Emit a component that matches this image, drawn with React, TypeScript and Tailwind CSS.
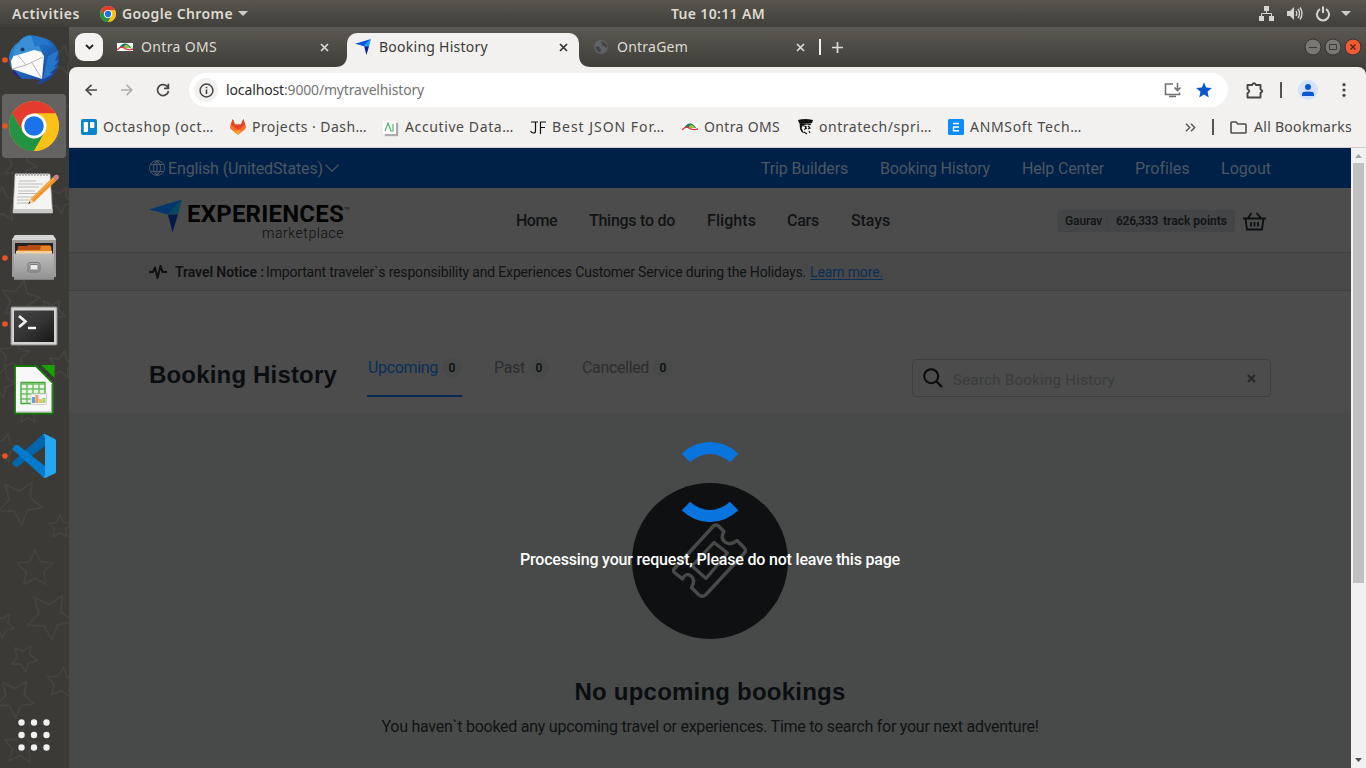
import { useLayoutEffect, useRef, type ReactNode } from 'react';

/** Single line of text, tracked so that it fills the width of its box. */
function T({ c, u, children }: { c: string; u?: boolean; children: string }) {
  const ref = useRef<HTMLSpanElement>(null);
  useLayoutEffect(() => {
    const el = ref.current;
    if (!el || !el.parentElement) return;
    el.style.letterSpacing = '0px';
    const room = el.parentElement.getBoundingClientRect().width;
    const own = el.getBoundingClientRect().width;
    el.style.letterSpacing = `${(room - own) / children.length}px`;
  }, [children]);
  return (
    <span className={`block shrink-0 whitespace-nowrap ${c}`}>
      <span ref={ref} className={u ? 'inline-block underline underline-offset-2' : 'inline-block'}>{children}</span>
    </span>
  );
}

function Svg({ c, box, children }: { c: string; box: string; children: ReactNode }) {
  return (
    <svg className={`block shrink-0 ${c}`} viewBox={box} fill="none">
      {children}
    </svg>
  );
}

function ChromeLogo({ c }: { c: string }) {
  return (
    <Svg c={c} box="0 0 50 50">
      <circle cx="25" cy="25" r="25" fill="#fbc116" />
      <path d="M25 25 14.2 31.2 3.4 12.5A25 25 0 0 1 46.6 12.5H25Z" fill="#e33b2e" />
      <path d="M3.4 12.5 14.2 31.2 25 37.5 35.8 31.2 25 50A25 25 0 0 1 3.4 12.5Z" fill="#229342" />
      <path d="M35.8 31.2 25 50A25 25 0 0 0 46.6 12.5H25Z" fill="#fbc116" />
      <circle cx="25" cy="25" r="12.5" fill="#fff" />
      <circle cx="25" cy="25" r="9.8" fill="#1a73e8" />
    </Svg>
  );
}

function CloseX({ c }: { c: string }) {
  return (
    <Svg c={`size-[9px] ${c}`} box="0 0 9 9">
      <path d="M1 1l7 7M8 1L1 8" stroke="currentColor" strokeWidth="1.7" />
    </Svg>
  );
}

function OntraIcon({ c }: { c: string }) {
  return (
    <Svg c={c} box="0 0 16 16">
      <path d="M0 4h16v8H0z" fill="#fff" />
      <path d="M2 9Q5 4 8.5 4.5 12 5 14 9Z" fill="#17766b" />
      <path d="M6 9q2-4 4-3t3 3Z" fill="#9bc53d" />
      <path d="M0 11Q4 6.5 7 9t9 1" stroke="#e2383f" strokeWidth="1.3" />
    </Svg>
  );
}

const star = (x: number, y: number, r: number, a: number) =>
  Array.from({ length: 10 }, (_, i) => {
    const q = i % 2 ? r * 0.48 : r;
    const t = a + (i * Math.PI) / 5;
    return `${(x + q * Math.sin(t)).toFixed(1)},${(y - q * Math.cos(t)).toFixed(1)}`;
  }).join(' ');

const STARS: number[][] = [
  [20, 165, 17, 0.4], [2, 205, 18, 0], [60, 200, 14, 0.5], [20, 300, 20, 0.2], [52, 312, 14, 0.6],
  [14, 355, 16, 0.1], [62, 365, 14, 0.2], [0, 382, 16, 0.4], [28, 412, 12, 0], [4, 448, 15, 0.3],
  [20, 502, 23, 0.55], [60, 527, 12, 0], [35, 569, 19, 0], [50, 616, 24, 0.55], [2, 625, 13, 0.6],
  [24, 658, 14, 0.5], [15, 698, 20, 0.6], [62, 683, 16, 0.1], [21, 747, 18, 0.1], [62, 60, 15, 0.2], [55, 110, 14, 0],
];

function Dock() {
  return (
    <div className="relative flex w-[69px] shrink-0 flex-col bg-[#3b3a37]">
      <svg className="absolute inset-0 h-full w-full" viewBox="0 27 69 741" fill="none">
        {STARS.map(([x, y, r, a], i) => (
          <polygon key={i} points={star(x, y, r, a)} stroke="#444340" strokeWidth="1.8" strokeLinejoin="round" />
        ))}
      </svg>
      <div className="relative flex h-[741px] flex-col">
        {/* Thunderbird */}
        <Svg c="h-[66px] w-[69px]" box="0 27 69 66">
          <defs>
            <linearGradient id="tb" x1="0" y1="0" x2="1" y2="1"><stop offset="0" stopColor="#2d93dc" /><stop offset=".5" stopColor="#1d68bd" /><stop offset="1" stopColor="#1d2f86" /></linearGradient>
          </defs>
          <circle cx="5" cy="60" r="2.8" fill="#e95420" />
          <path d="M19 42Q23 36 30 35L33 37Q47 36 54 44Q61 53 58 66Q54 80 40 84L36 84 41 81 35 79 22 79Q9 71 9 58Q10 47 19 42Z" fill="url(#tb)" />
          <path d="M13 69 22 79 13 74Z" fill="#35206f" />
          <path d="M48 56 59 50 55 61 59 60 54 67 58 66 50 73 53 74 43 79" fill="#2677c9" />
          <path d="M26 50 40 50 44 56 42 79 12 69 11 61 15 53Z" fill="#fafafa" />
          <path d="M16 53 26 65 43 57M26 65 12 69M32 63 42 79" stroke="#b0b0b0" strokeWidth=".9" />
          <path d="M19 42Q12 49 14 56L21 54 34 50 42 52 38 44 31 36Q23 36 19 42Z" fill="#3a8fd6" />
          <path d="M31 35Q45 36 53 47 43 42 35 47Z" fill="#2477cc" />
          <circle cx="22.500" cy="49.500" r="2" fill="#1f3965" />
        </Svg>
        {/* Chrome */}
        <div className="flex h-[66px] items-center">
          <div className="ml-[2px] flex h-16 w-16 items-center rounded-[4px] bg-[#646361]">
            <Svg c="size-[6px]" box="0 0 6 6"><circle cx="3" cy="3" r="2.800" fill="#e95420" /></Svg>
            <ChromeLogo c="ml-[1px] size-[50px]" />
          </div>
        </div>
        {/* Text editor */}
        <Svg c="h-[66px] w-[69px]" box="0 159 69 66">
          <path d="M15 174H50L52.500 213H13Z" fill="#f4f4f2" stroke="#aaa" strokeWidth=".7" />
          <path d="M13 209H52.500V213H13Z" fill="#c9cac8" />
          <path d="M17 176V173M20 176V173M23 176V173M26 176V173M29 176V173M32 176V173M35 176V173M38 176V173M41 176V173M44 176V173M47 176V173" stroke="#a4a4a4" strokeWidth="1.400" />
          <path d="M19 181H36M18 184H43M18 187H39M18 191H35M18 193.500H37M17 197H33M17 200H31M17 203H28" stroke="#bcbcbc" strokeWidth="1.200" />
          <path d="M28 204 30.500 199 53 177 56.500 180.500 34 202Z" fill="#f0962c" />
          <path d="M30.500 199 34 202 28 204Z" fill="#ebd7a9" />
          <path d="M53 177 55 175Q60 174 58.500 178.500L56.500 180.500Z" fill="#d48388" />
          <path d="M31 200 54 178" stroke="#f9bc63" />
          <path d="M28 204l1.500-2.500 1 1.300Z" fill="#222" />
        </Svg>
        {/* Files */}
        <Svg c="h-[66px] w-[69px]" box="0 225 69 66">
          <defs><linearGradient id="fl" x1="0" y1="0" x2="0" y2="1"><stop stopColor="#bcbcbc" /><stop offset="1" stopColor="#929292" /></linearGradient></defs>
          <circle cx="5" cy="258" r="2.800" fill="#e95420" />
          <path d="M15 235H53L56 239V277H54V279.500H14V277H12V239Z" fill="#9b9b9b" />
          <path d="M15 235H53L56 240H12Z" fill="#d6d6d6" />
          <path d="M15 243H53V255H15Z" fill="#25211e" />
          <path d="M18 246H27L28 245H50V254H17Z" fill="#b54d12" />
          <path d="M17 250H40L41 246H51L52 254H16Z" fill="#e68426" />
          <path d="M16 251H52V255H16Z" fill="#f7d09b" />
          <path d="M14 253.500H54V279.500H14Z" fill="url(#fl)" />
          <rect x="28" y="262.500" width="12" height="9.500" rx="2" stroke="#777" />
          <rect x="30" y="264.500" width="8" height="5.500" rx=".5" fill="#eee" stroke="#666" strokeWidth=".8" />
        </Svg>
        {/* Terminal */}
        <Svg c="h-[66px] w-[69px]" box="0 291 69 66">
          <defs><linearGradient id="tm" x1="0" y1="0" x2="1" y2="1"><stop stopColor="#454545" /><stop offset=".5" stopColor="#353535" /><stop offset="1" stopColor="#171717" /></linearGradient></defs>
          <circle cx="5" cy="324" r="2.800" fill="#e95420" />
          <rect x="11" y="307" width="46" height="38" rx="1" fill="#d3d3d3" stroke="#888" />
          <rect x="14" y="310.500" width="40" height="31.500" fill="url(#tm)" />
          <path d="M19 316 25.500 321.500 19 327" stroke="#f3f3f3" strokeWidth="2.700" />
          <path d="M28 328H36" stroke="#f3f3f3" strokeWidth="2.500" />
        </Svg>
        {/* Spreadsheet */}
        <Svg c="h-[66px] w-[69px]" box="0 357 69 66">
          <path d="M15 366H36L53 383V413.500H15Z" fill="#f8f8f8" stroke="#147808" strokeWidth="1.800" />
          <path d="M16.500 412H51.500V384" stroke="#aaa" />
          <path d="M41 365H54.500V378Z" fill="#18a303" />
          <path d="M21 382.500H45V403.500H21Z" fill="#e8f5e3" stroke="#43a638" strokeWidth="1.300" />
          <path d="M21 384H45M21 389H45M21 394H45M21 399H45M27 383V403M33 383V403M39 383V403" stroke="#6ebb63" strokeWidth="1.400" />
          <path d="M31 394H46.500V404.500H31Z" fill="#f8f8f8" stroke="#ccc" strokeWidth=".8" />
          <path d="M32 397H35V403H32Z" fill="#5aa4e3" /><path d="M35.300 395H38.500V403H35.300Z" fill="#ef9a70" /><path d="M39 399H42V403H39Z" fill="#f6c34f" /><path d="M42.300 398H45.500V403H42.300Z" fill="#98db7a" />
        </Svg>
        {/* VS Code */}
        <Svg c="h-[66px] w-[69px]" box="0 423 69 66">
          <circle cx="5" cy="456" r="2.800" fill="#e95420" />
          <path d="M12 462.500 43 434 45 435V446L18 466.500Q16 468 14.500 466L12 463.500Z" fill="#0065a9" />
          <path d="M12 449 15 445.500Q16.500 444 18.500 445.500L45 466V476L43 477Z" fill="#007acc" />
          <path d="M43 434 45 434 55 439Q56 440 56 441V471Q56 473 55 473.500L45 478 43 477.500Q45 477 45 474V438Q45 435 43 434Z" fill="#27a6f2" />
        </Svg>
        <div className="flex-1" />
        <Svg c="h-[66px] w-[69px]" box="0 702 69 66">
          {[722.5, 735, 747.5].map((y) => [21.5, 34, 46.5].map((x) => <circle key={`${x}-${y}`} cx={x} cy={y} r="3.2" fill="#f0f0ee" />))}
        </Svg>
      </div>
    </div>
  );
}

function TopBar() {
  return (
    <div className="flex h-[27px] shrink-0 items-center bg-linear-to-b from-[#57554d] to-[#403f3a] text-[14px] leading-[20px] font-semibold text-[#dfdbd2]">
      <T c="ml-[12px] w-[68px]">Activities</T>
      <ChromeLogo c="ml-[20px] size-4" />
      <T c="ml-[6px] w-[111px]">Google Chrome</T>
      <Svg c="ml-[5px] h-[5px] w-[10px]" box="0 0 10 5"><path d="M0 0h10L5 5Z" fill="#cfccc4" /></Svg>
      <T c="ml-[423px] w-[94px]">Tue 10:11 AM</T>
      <Svg c="ml-[494px] h-[15px] w-[15px]" box="0 0 15 15">
        <path d="M5 0h5v5H5zM0 10h5v5H0zM10 10h5v5h-5z" fill="#d6d4cf" />
        <path d="M7.500 5v3M2.500 10V7.500h10V10" stroke="#d6d4cf" />
      </Svg>
      <Svg c="ml-[13px] h-[15px] w-[16px]" box="0 0 16 15">
        <path d="M0 5h3l4-4v13l-4-4H0Z" fill="#d6d4cf" />
        <path d="M9 5q1.500 2.500 0 5M11 3q3 4.500 0 9M13 1.500q4 6 0 12" stroke="#d6d4cf" strokeWidth="1.400" />
      </Svg>
      <Svg c="ml-[13px] h-[16px] w-[14px]" box="0 0 14 16">
        <path d="M4 3.200a6 6 0 1 0 6 0M7 .5V7" stroke="#d6d4cf" strokeWidth="2" />
      </Svg>
      <Svg c="ml-[11px] h-[5px] w-[10px]" box="0 0 10 5"><path d="M0 0h10L5 5Z" fill="#cfccc4" /></Svg>
    </div>
  );
}

function PlaneMark({ c, dim }: { c: string; dim?: boolean }) {
  return (
    <Svg c={c} box="0 0 33 33">
      <path d="M0 10 33 0 19 15Z" fill={dim ? '#05376f' : '#0a56e0'} />
      <path d="M33 0 29 15 19 15Z" fill={dim ? '#07485f' : '#10a3ea'} />
      <path d="M19 15 29 15 23.500 33Z" fill={dim ? '#07194a' : '#0b1ea0'} />
    </Svg>
  );
}

function TabStrip() {
  return (
    <div className="flex h-[40px] items-end bg-linear-to-b from-[#5b5951] to-[#3f3e39] text-[14px] leading-[20px]">
      <div className="flex h-[40px] w-[266px] items-center pl-[6px]">
        <div className="flex size-[28px] items-center justify-center rounded-[9px] bg-[#f4f3f1]">
          <Svg c="h-[6px] w-[9px]" box="0 0 9 6"><path d="M1 1l3.500 3.500L8 1" stroke="#222" strokeWidth="1.800" /></Svg>
        </div>
        <OntraIcon c="ml-[14px] size-4" />
        <T c="ml-[8px] w-[76px] text-[#dedbd3]">Ontra OMS</T>
        <CloseX c="ml-[103px] text-[#dedbd3]" />
      </div>
      <Svg c="h-[12px] w-[12px]" box="0 0 12 12"><path d="M12 0v12H0Q12 12 12 0Z" fill="#f2f1ef" /></Svg>
      <div className="flex h-[34px] w-[232px] items-center rounded-t-[10px] bg-[#f2f1ef] pb-[6px] pl-[8px] text-[#3b3a38]">
        <PlaneMark c="size-[16px]" />
        <T c="ml-[8px] w-[109px]">Booking History</T>
        <CloseX c="ml-[71px] text-[#333]" />
      </div>
      <Svg c="h-[12px] w-[12px]" box="0 0 12 12"><path d="M0 0v12h12Q0 12 0 0Z" fill="#f2f1ef" /></Svg>
      <div className="flex h-[40px] flex-1 items-center">
        <Svg c="ml-[3px] size-[14px]" box="0 0 14 14">
          <circle cx="7" cy="7" r="7" fill="#5f6368" />
          <path d="M1.500 7q3-1 4 .5l1.500 1.500-.5 3.500q-4-1-5-5.500ZM6 2l2.500 1-1 2 2.500 1 1.500 1.500 2-.5Q12 3 9 1.500Z" fill="#434240" />
        </Svg>
        <T c="ml-[9px] w-[71px] text-[#dedbd3]">OntraGem</T>
        <CloseX c="ml-[108px] text-[#dedbd3]" />
        <div className="ml-[14px] h-4 w-[2px] bg-[#f2f1ef]" />
        <Svg c="ml-[11px] size-[11px]" box="0 0 11 11"><path d="M5.500 0v11M0 5.500h11" stroke="#dedbd3" strokeWidth="1.700" /></Svg>
        <Svg c="mr-[4px] ml-auto h-[18px] w-[58px]" box="0 0 58 18">
          <circle cx="9" cy="9" r="8" fill="#7a7870" stroke="#35342f" /><path d="M5 9.500h8" stroke="#3b3a36" />
          <circle cx="29" cy="9" r="8" fill="#7a7870" stroke="#35342f" /><path d="M25.500 6.500h7v5h-7z" stroke="#3b3a36" />
          <circle cx="49" cy="9" r="8" fill="#ec5b36" stroke="#35342f" /><path d="M46.500 6.500l5 5M51.500 6.500l-5 5" stroke="#52210f" strokeWidth="1.200" />
        </Svg>
      </div>
    </div>
  );
}

function Toolbar() {
  return (
    <div className="bg-[#3f3e39]">
      <div className="flex h-[46px] items-center rounded-t-[8px] bg-[#f2f1ef]">
        <Svg c="ml-[16px] size-[12px]" box="0 0 12 12"><path d="M12 6H1M6.500 .8L1.200 6l5.300 5.200" stroke="#474645" strokeWidth="1.700" /></Svg>
        <Svg c="ml-[24px] size-[12px]" box="0 0 12 12"><path d="M0 6h11M5.500 .8L10.800 6l-5.300 5.200" stroke="#b0afad" strokeWidth="1.700" /></Svg>
        <Svg c="ml-[23px] size-[14px]" box="0 0 14 14"><path d="M12.500 8A5.500 5.500 0 1 1 11 3.200L12 4.500M12.400 .8v4.500H8" stroke="#474645" strokeWidth="1.700" /></Svg>
        <div className="ml-[19px] flex h-[34px] w-[1039px] items-center rounded-full bg-white">
          <div className="ml-[5px] flex size-6 items-center justify-center rounded-full bg-[#f2f1ef]">
            <Svg c="size-[15px]" box="0 0 15 15"><circle cx="7.500" cy="7.500" r="6.400" stroke="#474645" strokeWidth="1.500" /><path d="M7.500 6.500v4.500M7.500 3.700v1.600" stroke="#474645" strokeWidth="1.600" /></Svg>
          </div>
          <div className="ml-[8px] flex text-[14px] leading-[20px]">
            <T c="w-[58px] text-[#2f2e2d]">localhost</T>
            <T c="w-[140px] text-[#757472]">:9000/mytravelhistory</T>
          </div>
          <Svg c="ml-[740px] h-[15px] w-[18px]" box="0 0 18 15">
            <path d="M9 1H1.500v10.500h14V9.500M13.500 0v7M10.500 4.500l3 3 3-3M5 13.500h7" stroke="#73716f" strokeWidth="1.600" />
          </Svg>
          <Svg c="ml-[14px] h-[16px] w-[16px]" box="0 0 16 16"><path d="M8 .3l2.100 5.200 5.700.5-4.300 3.800 1.300 5.700L8 12.500l-4.800 3 1.300-5.700L.2 6l5.700-.5Z" fill="#0b57d0" /></Svg>
        </div>
        <Svg c="ml-[18px] h-[17px] w-[18px]" box="0 0 18 17">
          <path d="M1.500 3H6q2-3.500 4 0h4.500v4.300q3.500 1.700 0 3.500v4.700h-13v-4.300q3.500-2 0-4.200Z" stroke="#474645" strokeWidth="1.900" strokeLinejoin="round" />
        </Svg>
        <div className="ml-[16px] h-4 w-[2px] bg-[#55534c]" />
        <div className="ml-[16px] flex size-5 items-center justify-center rounded-full bg-[#d3e3fd]">
          <Svg c="size-[12px]" box="0 0 12 12"><circle cx="6" cy="3" r="3" fill="#0b57d0" /><path d="M0 12v-2.500Q0 7.500 6 7.500t6 2V12Z" fill="#0b57d0" /></Svg>
        </div>
        <Svg c="ml-[24px] h-[14px] w-[4px]" box="0 0 4 14"><circle cx="2" cy="1.700" r="1.600" fill="#474645" /><circle cx="2" cy="7" r="1.600" fill="#474645" /><circle cx="2" cy="12.300" r="1.600" fill="#474645" /></Svg>
      </div>
      <div className="flex h-[35px] items-center border-b border-[#cfcdca] bg-[#f2f1ef] pb-[6px] text-[14px] leading-[20px] text-[#4a4947]">
        <Svg c="ml-[12px] size-4" box="0 0 16 16"><rect width="16" height="16" rx="2" fill="#0a84d0" /><rect x="2.700" y="3" width="4.300" height="10" rx=".8" fill="#fff" /><rect x="9" y="3" width="4.300" height="6" rx=".8" fill="#fff" /></Svg>
        <T c="ml-[6px] w-[111px]">Octashop (oct…</T>
        <Svg c="ml-[16px] size-4" box="0 0 16 16"><path d="M2.700 0 .3 7q-.8 2 1 3.500L8 15.700l6.700-5.200q1.800-1.500 1-3.500L13.300 0 11 5.500H5Z" fill="#fc6d26" /><path d="M2.700 0 5 5.500h6L13.300 0l1.800 5.500L8 11 .8 5.500Z" fill="#e24329" /><path d="M8 11l3.500 2L8 15.700 4.500 13Z" fill="#fca326" /></Svg>
        <T c="ml-[6px] w-[115px]">Projects · Dash…</T>
        <div className="ml-[16px] flex h-[13px] w-[13px] items-center justify-center bg-white shadow-[2px_2px_1px_#aaa]">
          <Svg c="size-[11px]" box="0 0 11 11"><path d="M1 9 4 1l3 8h2V2" stroke="#55b56a" strokeWidth="1.200" /></Svg>
        </div>
        <T c="ml-[9px] w-[109px]">Accutive Data…</T>
        <Svg c="ml-[16px] h-[13px] w-[17px]" box="0 0 17 13"><path d="M1 1h7M5.500 1v9q0 2-2 2t-3-2M10.500 13V1H16M10.500 6.500H15" stroke="#111" strokeWidth="1.200" /></Svg>
        <T c="ml-[5px] w-[113px]">Best JSON For…</T>
        <OntraIcon c="ml-[17px] size-4" />
        <T c="ml-[6px] w-[76px]">Ontra OMS</T>
        <Svg c="ml-[18px] h-[16px] w-[15px]" box="0 0 15 16">
          <path d="M0 1Q7-1 15 1L14 4H1Z" fill="#111" />
          <path d="M1.500 4 2 10q1 3 4 4.500L5 12l-1.500-3L5 6l5-.5 2 1 1.500-2Z" fill="#111" />
          <path d="M5 6.500l3 1-1 2.500 2-1M10 7l2 2-2 1M6 13l3 2M11 12l1 2" stroke="#111" strokeWidth="1.100" />
        </Svg>
        <T c="ml-[6px] w-[113px]">ontratech/spri…</T>
        <Svg c="ml-[16px] size-4" box="0 0 16 16"><rect width="16" height="16" rx="1.500" fill="#0a8bff" /><path d="M5 4.500h6M5 8h6M5 11.700h6M5.500 8v4" stroke="#fff" strokeWidth="1.400" /></Svg>
        <T c="ml-[6px] w-[112px]">ANMSoft Tech…</T>
        <Svg c="ml-[103px] h-[9px] w-[11px]" box="0 0 11 9"><path d="M1 .8 4.700 4.500 1 8.200M6 .8 9.700 4.500 6 8.200" stroke="#5a5957" strokeWidth="1.500" /></Svg>
        <div className="ml-[16px] h-4 w-[2px] bg-[#55534c]" />
        <Svg c="ml-[16px] h-[13px] w-[17px]" box="0 0 17 13"><path d="M1.800 1H6l2 2h7.200q.8 0 .8.800v7.400q0 .8-.8.800H1.800Q1 12 1 11.200V1.800Q1 1 1.800 1Z" stroke="#4f4e4c" strokeWidth="1.600" /></Svg>
        <T c="ml-[7px] w-[98px]">All Bookmarks</T>
      </div>
    </div>
  );
}

function SiteHeader() {
  return (
    <>
      <div className="flex h-[40px] items-center bg-[#002147] pl-[80px] text-[16px] leading-[22px] text-[#4c5762]">
        <Svg c="size-4" box="0 0 16 16"><path d="M8 .5a7.500 7.500 0 1 0 0 15 7.500 7.500 0 0 0 0-15ZM8 .5v15M1.500 4.500h13M1.500 11.500h13M8 .5q-7.500 7.500 0 15M8 .5q7.500 7.500 0 15" stroke="#4c5762" strokeWidth="1" /></Svg>
        <T c="ml-[3px] w-[155px] pt-[2px]">English (UnitedStates)</T>
        <Svg c="ml-[2px] h-[8px] w-[14px]" box="0 0 14 8"><path d="M.5.8 7 7.200 13.500.8" stroke="#4c5762" strokeWidth="1.200" /></Svg>
        <T c="ml-[422px] w-[87px] pt-[2px]">Trip Builders</T>
        <T c="ml-[32px] w-[110px] pt-[2px]">Booking History</T>
        <T c="ml-[32px] w-[82px] pt-[2px]">Help Center</T>
        <T c="ml-[31px] w-[54px] pt-[2px]">Profiles</T>
        <T c="ml-[32px] w-[50px] pt-[2px]">Logout</T>
      </div>
      <div className="flex h-[65px] items-center border-b border-[#3f4040] pl-[80px] text-[#111315]">
        <PlaneMark c="mb-[8px] h-[34px] w-[33px]" dim />
        <div className="ml-[5px] flex w-[165px] flex-col pt-[1px]">
          <div className="flex">
            <T c="w-[157px] text-[24px] leading-[24px] font-bold text-[#030303]">EXPERIENCES</T>
            <T c="w-[8px] text-[10px] leading-[18px]">™</T>
          </div>
          <T c="ml-[75px] w-[82px] text-[14px] leading-[14px] font-light text-[#0c0c0c]">marketplace</T>
        </div>
        <div className="ml-[164px] flex pt-[2px] text-[16px] leading-[22px] font-medium">
          <T c="w-[41px]">Home</T>
          <T c="ml-[32px] w-[86px]">Things to do</T>
          <T c="ml-[32px] w-[49px]">Flights</T>
          <T c="ml-[31px] w-[32px]">Cars</T>
          <T c="ml-[32px] w-[39px]">Stays</T>
        </div>
        <div className="mt-[2px] ml-[167px] flex h-[22px] w-[178px] items-center rounded-[4px] bg-[#444546] pl-[8px] text-[12px] leading-[16px] font-medium">
          <T c="w-[37px]">Gaurav</T>
          <div className="ml-[5px] h-[14px] w-px bg-[#3f4040]" />
          <T c="ml-[8px] w-[42px] font-semibold">626,333</T>
          <T c="ml-[5px] w-[64px] font-semibold">track points</T>
        </div>
        <Svg c="mt-[2px] ml-[8px] h-[19px] w-[23px]" box="0 0 23 19">
          <path d="M0 6.500h23M2.500 6.500 4 17.500h15l1.500-11M8.500 1 5 6M13.500 1 18 6M8 10v4.500M11.500 10v4.500M15 10v4.500" stroke="#0d0f10" strokeWidth="1.800" />
        </Svg>
      </div>
      <div className="flex h-[38px] items-center border-b border-[#3f4040] bg-[#494949] pl-[80px] text-[14px] leading-[20px] text-[#101214]">
        <Svg c="h-[14px] w-[18px]" box="0 0 18 14"><path d="M0 7h4l2-4.500L8.500 13 11.500 1l2 6H18" stroke="#0c0e10" strokeWidth="1.900" strokeLinejoin="round" /></Svg>
        <T c="ml-[8px] w-[89px] font-semibold">Travel Notice :</T>
        <T c="ml-[2px] w-[540px]">Important traveler`s responsibility and Experiences Customer Service during the Holidays.</T>
        <T u c="ml-[4px] w-[73px] text-[#092f56]">Learn more.</T>
      </div>
    </>
  );
}

function Count() {
  return <span className="ml-[4px] flex h-[18px] w-[20px] items-center justify-center rounded-full bg-[#474a49] text-[12px] leading-[16px] font-medium text-[#0b0c0d]">0</span>;
}

function Booking() {
  return (
    <>
      <div className="flex h-[122px] items-start pl-[80px]">
        <h1 className="mt-[68px] w-[188px] shrink-0 whitespace-nowrap font-['Liberation_Sans',sans-serif] text-[24px] leading-[31px] font-bold text-[#0b0e11]">
          <T c="w-[188px]">Booking History</T>
        </h1>
        <div className="mt-[66px] ml-[30px] flex text-[16px] leading-[22px] text-[#2b2d2f]">
          <div className="flex h-[40px] w-[95px] items-start border-b-2 border-[#052b52] text-[#082f58]">
            <T c="ml-[1px] w-[70px]">Upcoming</T>
            <div className="pt-[2px]"><Count /></div>
          </div>
          <div className="ml-[32px] flex"><T c="w-[31px]">Past</T><div className="pt-[2px]"><Count /></div></div>
          <div className="ml-[33px] flex"><T c="w-[67px]">Cancelled</T><div className="pt-[2px]"><Count /></div></div>
        </div>
        <div className="mt-[68px] ml-auto mr-[80px] flex h-[38px] w-[359px] items-center rounded-[4px] border border-[#3e3f40] pl-[10px]">
          <Svg c="size-[20px]" box="0 0 20 20"><circle cx="8.200" cy="8.200" r="7" stroke="#080a0b" strokeWidth="2" /><path d="M13 13l6 6" stroke="#080a0b" strokeWidth="2.200" /></Svg>
          <T c="ml-[10px] w-[162px] pt-[3px] text-[15px] leading-[20px] text-[#3a3c3d]">Search Booking History</T>
          <Svg c="ml-[132px] size-[9px]" box="0 0 9 9"><path d="M1 1l7 7M8 1L1 8" stroke="#242628" strokeWidth="2" /></Svg>
        </div>
      </div>
      <div className="relative flex flex-1 flex-col items-center bg-[#484a49] pt-[70px] text-[#101214]">
        <div className="flex size-[156px] items-center justify-center rounded-full bg-[#0f1011]">
          <Svg c="size-[80px]" box="0 0 80 80">
            <path d="M4.500 47.500 43 5.500Q46 2.500 49 5.500L54 10.500Q50 17 55 21Q60 25 67 19.500L74 26.500Q77 29.500 74 32.500L36 73.500Q32 77 28.500 73.500L21.500 66.500Q26 59 21 55Q16 51 12.500 58L4.500 51.500Q2.500 49.500 4.500 47.500Z" stroke="#484a49" strokeWidth="3.400" strokeLinejoin="round" />
            <path d="M44 21.500 57.500 32 36 57.500 22 45Z" stroke="#484a49" strokeWidth="3.200" strokeLinejoin="round" />
          </Svg>
        </div>
        <h2 className="mt-[36px] font-['Liberation_Sans',sans-serif] text-[24px] leading-[33px] font-bold text-[#0b0e11]"><T c="w-[271px]">No upcoming bookings</T></h2>
        <p className="mt-[8px] text-[16px] leading-[22px]"><T c="w-[657px]">You haven`t booked any upcoming travel or experiences. Time to search for your next adventure!</T></p>
        <div className="absolute inset-x-0 top-[29px] flex flex-col items-center">
          <Svg c="size-20" box="0 0 80 80">
            <path d="M11.700 11.700A40 40 0 0 1 68.300 11.700L59.800 20.200A28 28 0 0 0 20.200 20.200ZM11.700 68.300A40 40 0 0 0 68.300 68.300L59.800 59.800A28 28 0 0 1 20.200 59.800Z" fill="#0874de" />
          </Svg>
          <T c="mt-[27px] w-[380px] text-[16px] leading-[22px] font-medium text-white">Processing your request, Please do not leave this page</T>
        </div>
      </div>
    </>
  );
}

export default function App() {
  return (
    <div className="flex h-[768px] w-[1366px] flex-col overflow-hidden font-['Noto_Sans',sans-serif]">
      <TopBar />
      <div className="flex flex-1">
        <Dock />
        <div className="flex w-[1297px] flex-col">
          <TabStrip />
          <Toolbar />
          <div className="flex flex-1">
            <div className="flex w-[1282px] flex-col bg-[#4c4c4c] font-['Roboto',sans-serif]">
              <SiteHeader />
              <Booking />
            </div>
            <div className="flex w-[15px] flex-col items-center bg-[#f1f1f1] pt-[6px] pb-[6px]">
              <Svg c="h-[4px] w-[7px]" box="0 0 7 4"><path d="M0 4h7L3.500 0Z" fill="#a3a3a3" /></Svg>
              <div className="mt-[5px] h-[420px] w-[11px] bg-[#c1c1c1]" />
              <Svg c="mt-auto h-[4px] w-[7px]" box="0 0 7 4"><path d="M0 0h7L3.500 4Z" fill="#505050" /></Svg>
            </div>
          </div>
        </div>
      </div>
    </div>
  );
}
